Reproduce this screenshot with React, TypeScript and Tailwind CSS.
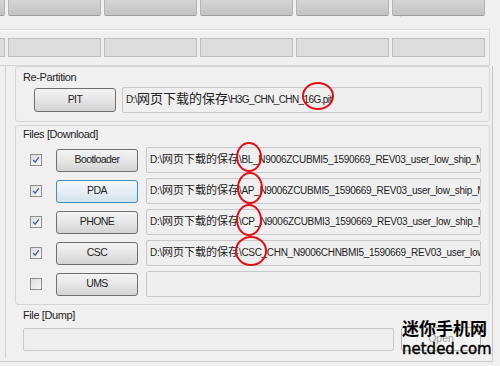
import React from "react";

const btn =
  "flex items-center justify-center rounded-[3px] border text-[10.5px] tracking-[-0.6px] text-[#1e1e1e] bg-gradient-to-b";
const normalBtn = "border-[#707070] from-[#f3f3f3] via-[#e6e6e6] to-[#d3d3d3]";
const focusBtn = "border-[#3d8eb9] from-[#f2f8fb] via-[#e4eef4] to-[#d3e3ec]";
const field =
  "h-[26px] overflow-hidden whitespace-nowrap rounded-[2px] border border-[#c9c9c9] bg-[#efefef] px-[3px] pt-[3px] leading-[14px] text-[#222]";

function CheckBox({ checked }: { checked: boolean }) {
  return (
    <div className="h-[12px] w-[12px] border border-[#8f8f8f] bg-gradient-to-br from-[#dcdcdc] to-[#f8f8f8] p-[1px]">
      {checked && (
        <svg viewBox="0 0 10 10" className="h-full w-full">
          <path d="M1.5 5 L4 7.8 L8.5 1.5" fill="none" stroke="#4a5d94" strokeWidth="1.6" />
        </svg>
      )}
    </div>
  );
}

function FilePath({ file, big }: { file: string; big?: boolean }) {
  const latin = big ? "text-[10px] tracking-[-0.6px]" : "text-[10px] tracking-[-0.3px]";
  return (
    <>
      <span className={latin}>D:\</span>
      <span className={big ? "text-[13px]" : "text-[11px]"}>网页下载的保存</span>
      <span className={latin}>\{file}</span>
    </>
  );
}

const rows = [
  { name: "Bootloader", file: "BL_N9006ZCUBMI5_1590669_REV03_user_low_ship_MULTI_CERT.tar.md5", checked: true },
  { name: "PDA", file: "AP_N9006ZCUBMI5_1590669_REV03_user_low_ship_MULTI_CERT.tar.md5", checked: true, focus: true },
  { name: "PHONE", file: "CP_N9006ZCUBMI3_1590669_REV03_user_low_ship_MULTI_CERT.tar.md5", checked: true },
  { name: "CSC", file: "CSC_CHN_N9006CHNBMI5_1590669_REV03_user_low_ship_MULTI_CERT.tar.md5", checked: true },
  { name: "UMS", file: "", checked: false },
];

const tabs = [0, 1, 2, 3, 4, 5];

export default function App() {
  return (
    <div className="relative h-[366px] w-[500px] overflow-hidden bg-[#f0f0f0] font-['Liberation_Sans','Noto_Sans_CJK_SC',sans-serif]">
      {/* top button strip */}
      <div className="flex h-[17px] w-[489px] gap-[3px] border-r border-[#d2d2d2] -ml-[88px]">
        {tabs.map((t) => (
          <div
            key={t}
            className="h-[16px] w-[93px] shrink-0 rounded-b-[2px] border-x border-b border-x-[#b4b4b4] border-b-[#9c9c9c] bg-gradient-to-b from-[#d4d4d4] to-[#c3c3c3]"
          />
        ))}
      </div>

      {/* second strip */}
      <div className="mt-[12px] h-[37px] w-[490px] border-y border-r border-[#d6d6d6] shadow-[inset_0_1px_0_#ffffff]">
        <div className="mt-[8px] flex gap-[3px] -ml-[88px]">
          {tabs.map((t) => (
            <div
              key={t}
              className="h-[19px] w-[93px] shrink-0 border border-[#bdbdbd] bg-[#dddddd]"
            />
          ))}
        </div>
      </div>

      {/* main area */}
      <div className="flex h-[296px] w-[493px] border-b border-r border-[#c8c8c8]">
        <div className="h-[292px] w-[6px] border-r border-[#d0d0d0]" />
        <div className="ml-[9px] flex w-[475px] flex-col">
          {/* Re-Partition */}
          <div className="h-[56px] rounded-[3px] border border-[#d5d5d5] pl-[7px] pt-[4px]">
            <div className="text-[11px] leading-[12px] tracking-[-0.4px] text-[#1e1e1e]">Re-Partition</div>
            <div className="mt-[4px] flex items-center">
              <div className={`${btn} ${normalBtn} ml-[11px] h-[24px] w-[82px]`}>PIT</div>
              <div className={`${field} ml-[6px] w-[360px]`}>
                <FilePath file="H3G_CHN_CHN_16G.pit" big />
              </div>
            </div>
          </div>

          {/* Files [Download] */}
          <div className="mt-[3px] h-[180px] rounded-[3px] border border-[#d5d5d5] pl-[7px] pt-[2px]">
            <div className="text-[11px] leading-[12px] tracking-[-0.4px] text-[#1e1e1e]">Files [Download]</div>
            <div className="mt-[7px] flex flex-col gap-[5px]">
              {rows.map((r) => (
                <div key={r.name} className="flex h-[26px] items-center">
                  <div className="ml-[7px]">
                    <CheckBox checked={r.checked} />
                  </div>
                  <div className={`${btn} ${r.focus ? focusBtn : normalBtn} ml-[14px] h-[23px] w-[82px]`}>
                    {r.name}
                  </div>
                  <div className={`${field} ml-[8px] w-[335px]`}>
                    {r.file ? <FilePath file={r.file} /> : null}
                  </div>
                </div>
              ))}
            </div>
          </div>

          {/* File [Dump] */}
          <div className="pl-[8px] pt-[4px]">
            <div className="text-[11px] leading-[12px] tracking-[-0.4px] text-[#1e1e1e]">File [Dump]</div>
            <div className="mt-[6px] flex items-center">
              <div className="h-[23px] w-[371px] rounded-[2px] border border-[#c9c9c9] bg-[#efefef]" />
              <div className="ml-[7px] flex h-[24px] w-[80px] items-center justify-center rounded-[3px] border border-[#adb2b5] bg-[#f4f4f4] text-[10.5px] text-[#a0a0a0]">
                Open
              </div>
            </div>
          </div>
        </div>
      </div>

      {/* red annotation circles */}
      <svg className="pointer-events-none absolute inset-0" width="500" height="366">
        <g fill="none" stroke="#e01018" strokeWidth="2">
          <ellipse cx="318" cy="96" rx="15" ry="13" />
          <ellipse cx="249" cy="157" rx="12" ry="14" />
          <ellipse cx="250" cy="188" rx="12" ry="15" />
          <ellipse cx="249" cy="220" rx="12" ry="15" />
          <ellipse cx="251" cy="251" rx="15" ry="14" />
        </g>
      </svg>

      {/* watermark */}
      <div className="absolute left-[402px] top-[320px] flex flex-col text-black">
        <div className="text-[17px] font-bold leading-[20px]">迷你手机网</div>
        <div className="font-['DejaVu_Sans',sans-serif] text-[15px] leading-[18px] [-webkit-text-stroke:0.4px_black]">
          netded.com
        </div>
      </div>
    </div>
  );
}
